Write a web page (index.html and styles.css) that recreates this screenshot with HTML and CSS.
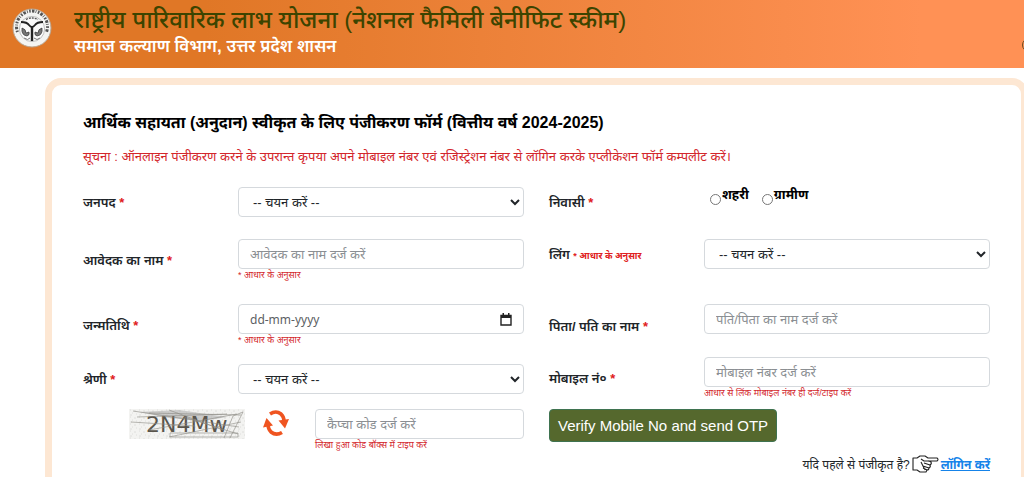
FILE: index.html
```html
<!DOCTYPE html>
<html lang="hi">
  <head>
    <title>राष्ट्रीय पारिवारिक लाभ योजना</title>
    <meta charset="utf-8"/>
    <meta name="viewport" content="width=device-width, initial-scale=1">
    <link rel="stylesheet" href="styles.css">
  </head>
  <body>
    <header class="site-header">
      <svg class="emblem" viewBox="0 0 40 40" role="img" aria-label="उत्तर प्रदेश">
        <circle cx="20" cy="20" r="19" fill="#f4f4f2" stroke="#b9a590"/>
        <path d="M5.500 24A15.500 15.500 0 1 1 34.500 24" fill="none" stroke="#555" stroke-width="3" stroke-dasharray="1.6 1.3 2.6 1.2 .8 1.4"/>
        <circle cx="20" cy="21" r="12.6" fill="#fafafa" stroke="#999" stroke-width=".6"/>
        <path d="M9 14q6 0 8 3q1.500 2 3 2t3-2q2-3 8-3" fill="none" stroke="#222" stroke-width="2"/>
        <path d="M20 19v14" stroke="#222" stroke-width="2.4"/>
        <path d="M14 11.500q6-3 12 0" fill="none" stroke="#555" stroke-width="1.4" stroke-dasharray="2 1"/>
        <path d="M10 20q-1 7 5 8q3-1 2-4l-3 1q0-4-4-5zM30 20q1 7-5 8q-3-1-2-4l3 1q0-4 4-5z" fill="#777" stroke="#333" stroke-width=".7"/>
        <path d="M12 30q4 3 6 0M22 30q3 3 6 0" fill="none" stroke="#777"/>
      </svg>
      <div>
        <h1 class="site-title">राष्ट्रीय पारिवारिक लाभ योजना (नेशनल फैमिली बेनीफिट स्कीम)</h1>
        <p class="site-dept">समाज कल्याण विभाग, उत्तर प्रदेश शासन</p>
      </div>
      <span class="header-ring"></span>
    </header>

    <main class="card">
      <h2 class="form-title">आर्थिक सहायता (अनुदान) स्वीकृत के लिए पंजीकरण फॉर्म (वित्तीय वर्ष 2024-2025)</h2>
      <p class="notice">सूचना : ऑनलाइन पंजीकरण करने के उपरान्त कृपया अपने मोबाइल नंबर एवं रजिस्ट्रेशन नंबर से लॉगिन करके एप्लीकेशन फॉर्म कम्पलीट करें।</p>

      <form class="form-grid">
        <div class="field">
          <label class="label" for="district">जनपद <span class="req">*</span></label>
          <select class="control" id="district"><option>-- चयन करें --</option></select>
        </div>
        <div class="field" role="group" aria-labelledby="area-label">
          <span class="label" id="area-label">निवासी <span class="req">*</span></span>
          <div class="radios">
            <input class="radio" type="radio" name="area" id="urban"><label class="radio-label" for="urban">शहरी</label>
            <input class="radio" type="radio" name="area" id="rural"><label class="radio-label" for="rural">ग्रामीण</label>
          </div>
        </div>

        <div class="field">
          <label class="label" for="name">आवेदक का नाम <span class="req">*</span></label>
          <div>
            <input class="control" id="name" type="text" placeholder="आवेदक का नाम दर्ज करें">
            <p class="hint">* आधार के अनुसार</p>
          </div>
        </div>
        <div class="field">
          <label class="label" for="gender">लिंग <span class="label-note">* आधार के अनुसार</span></label>
          <select class="control" id="gender"><option>-- चयन करें --</option></select>
        </div>

        <div class="field">
          <label class="label" for="dob">जन्मतिथि <span class="req">*</span></label>
          <div>
            <div class="control date-box">
              <input class="date-input" id="dob" type="text" placeholder="dd-mm-yyyy">
              <button class="icon-button" type="button" aria-label="कैलेंडर">
                <svg class="calendar" viewBox="0 0 12 13"><path d="M1 2.500h10v9.500H1z" fill="none" stroke="#222" stroke-width="1.400"/><path d="M1 2h10v3H1zM2.500 0h1.500v2H2.500zM8 0h1.500v2H8z" fill="#222"/></svg>
              </button>
            </div>
            <p class="hint">* आधार के अनुसार</p>
          </div>
        </div>
        <div class="field field-tall field-top">
          <label class="label" for="father">पिता/ पति का नाम <span class="req">*</span></label>
          <input class="control" id="father" type="text" placeholder="पति/पिता का नाम दर्ज करें">
        </div>

        <div class="field field-tall">
          <label class="label" for="category">श्रेणी <span class="req">*</span></label>
          <select class="control" id="category"><option>-- चयन करें --</option></select>
        </div>
        <div class="field">
          <label class="label" for="mobile">मोबाइल नं० <span class="req">*</span></label>
          <div>
            <input class="control" id="mobile" type="tel" placeholder="मोबाइल नंबर दर्ज करें">
            <p class="hint">आधार से लिंक मोबाइल नंबर ही दर्ज/टाइप करें</p>
          </div>
        </div>

        <div class="captcha">
          <svg class="captcha-image" viewBox="0 0 116 30" role="img" aria-label="2N4Mw">
            <defs>
              <pattern id="grain" width="9" height="7" patternUnits="userSpaceOnUse">
                <path d="M1 1h1M5 2h2M3 4h1M7 5h1M1 6h2" stroke="#dededc"/>
              </pattern>
            </defs>
            <path d="M0 0h116v30H0z" fill="#f3f3f1"/>
            <path d="M0 0h116v30H0z" fill="url(#grain)"/>
            <path d="M10 3L50 1L98 8L74 12L40 9z" fill="#aaa" opacity=".55"/>
            <text class="captcha-text" x="17" y="23">2N4Mw</text>
            <path d="M4 2L110 18M2 13L66 17M8 8L98 5M20 21L108 5M40 28L112 13M40 1L94 21M41 24h68v4H41zM95 29L104 7L114 3L101 29M55 8L109 25M20 4L112 6" fill="none" stroke="#8b8983" stroke-width=".6"/>
          </svg>
          <button class="icon-button" type="button" aria-label="नया कैप्चा">
            <svg class="refresh" viewBox="0 0 28 28">
              <path d="M8 5Q14 1 19 5Q22 8 22 12" fill="none" stroke="#ef5420" stroke-width="3.600"/>
              <path d="M16.500 11.500l10.500-1.500l-4 9.500z" fill="#ef5420"/>
              <path d="M20 23.500Q14 27 9 23Q6 20 6 15" fill="none" stroke="#ef5420" stroke-width="3.600"/>
              <path d="M1 18.500L4.500 9l6.500 7.500z" fill="#ef5420"/>
            </svg>
          </button>
          <div class="captcha-field">
            <input class="control" type="text" placeholder="कैप्चा कोड दर्ज करें" aria-label="कैप्चा कोड">
            <p class="hint">लिखा हुआ कोड बॉक्स में टाइप करें</p>
          </div>
        </div>
        <div>
          <button class="verify" type="button">Verify Mobile No and send OTP</button>
        </div>
      </form>

      <p class="login">यदि पहले से पंजीकृत है?
        <svg class="hand" viewBox="0 0 27 18" fill="#fff" stroke="#222" stroke-width="1.100" stroke-linejoin="round">
          <path d="M1 3h4l3-2h5l3 2h9q2 1.500 0 3h-8l2 1q1 2-1 3q1 2-1 3q0 2-2 2l-1 2H8l-3-2H1z"/>
          <path d="M17 6h-5l-3-2M18 10l-6-2M17 13l-6-2M15 15l-4-2M9 7l4 8" fill="none"/>
        </svg>
        <a class="login-link" href="#">लॉगिन करें</a>
      </p>
    </main>
  </body>
</html>
```

FILE: styles.css
```css
* {
  box-sizing: border-box;
}
html {
  overflow-x: hidden;
}
body {
  margin: 0;
  font-family: "Liberation Sans", "Noto Sans", sans-serif;
  font-size: 13px;
  color: #212529;
  background: #fff;
}
h1, h2, p {
  margin: 0;
}

/* header */
.site-header {
  display: flex;
  height: 68px;
  padding: 8px 0 0 12px;
  gap: 22px;
  overflow: hidden;
  background: linear-gradient(to right, #e07726 20%, #ff9155 90%);
}
.emblem {
  width: 40px;
  height: 40px;
  flex: none;
}
.site-title {
  font-size: 24px;
  font-weight: 500;
  line-height: 24px;
  color: #3c4400;
}
.site-dept {
  font-size: 17px;
  line-height: 30px;
  font-weight: 600;
  color: #fff;
}
.header-ring {
  flex: none;
  width: 14px;
  height: 14px;
  margin: 30px -12px 0 auto;
  border: 1px solid #6b4a20;
  border-radius: 50%;
}

/* the form */
.card {
  margin: 10px -4px 0 45px;
  padding: 26px 31px 40px;
  border: 7px solid #fde7d3;
  border-radius: 16px;
}
.form-title {
  font-size: 16px;
  line-height: 24px;
  color: #000;
}
.notice {
  margin-top: 10px;
  line-height: 24px;
  color: #d3262b;
}
.form-grid {
  display: grid;
  grid-template-columns: 1fr 1fr;
  grid-template-rows: 52px 65px 53px 52px auto;
  column-gap: 25px;
  align-items: start;
  margin-top: 18px;
}
.field {
  display: grid;
  grid-template-columns: 155px 1fr;
  align-items: center;
  min-height: 30px;
}
.field-tall {
  min-height: 44px;
}
.field-top .control {
  align-self: start;
}
.label {
  font-weight: 600;
}
.req {
  color: #e02020;
}
.label-note {
  font-size: 9px;
  font-weight: bold;
  color: #e02020;
}
.control {
  display: block;
  width: 100%;
  height: 30px;
  padding: 0 11px;
  border: 1px solid #d5d9dd;
  border-radius: 4px;
  background-color: #fff;
  font: inherit;
  color: #212529;
}
select.control {
  padding: 0 0 0 10px;
}
.control::placeholder,
.date-input::placeholder {
  color: #8b8f93;
}
.hint {
  font-size: 9px;
  line-height: 12px;
  color: #d3262b;
}
.date-box {
  display: flex;
  align-items: center;
}
.date-input {
  flex: 1;
  min-width: 0;
  padding: 0;
  border: 0;
  font: 12px "Noto Sans", sans-serif;
}
.date-input::placeholder {
  color: #5c6064;
}
.icon-button {
  display: flex;
  padding: 0;
  border: 0;
  background: none;
}
.calendar {
  width: 12px;
  height: 13px;
}
.radios {
  display: flex;
  align-items: flex-start;
  align-self: start;
  padding-left: 5px;
}
.radio {
  width: 11px;
  height: 11px;
  margin: 7px 1px 0;
}
.radio-label {
  margin-right: 12px;
  line-height: 16px;
  font-weight: bold;
  color: #000;
}

/* captcha row */
.captcha {
  display: flex;
  align-items: start;
  padding-left: 46px;
}
.captcha-image {
  width: 116px;
  height: 30px;
  margin-right: 17px;
}
.captcha-text {
  font: 22px "DejaVu Sans", sans-serif;
  fill: #5a554c;
}
.refresh {
  width: 28px;
  height: 28px;
}
.captcha-field {
  flex: 1;
  margin-left: 25px;
}
.verify {
  height: 33px;
  padding: 0 8px;
  border: 1px solid #3f7350;
  border-radius: 4px;
  background: #55682d;
  font: 15px "Liberation Sans", sans-serif;
  color: #fff;
}
.login {
  display: flex;
  justify-content: flex-end;
  align-items: center;
  margin-top: 4px;
  gap: 2px;
  font-size: 12px;
}
.hand {
  width: 27px;
  height: 18px;
}
.login-link {
  font-weight: bold;
  color: #1583e9;
}
```
